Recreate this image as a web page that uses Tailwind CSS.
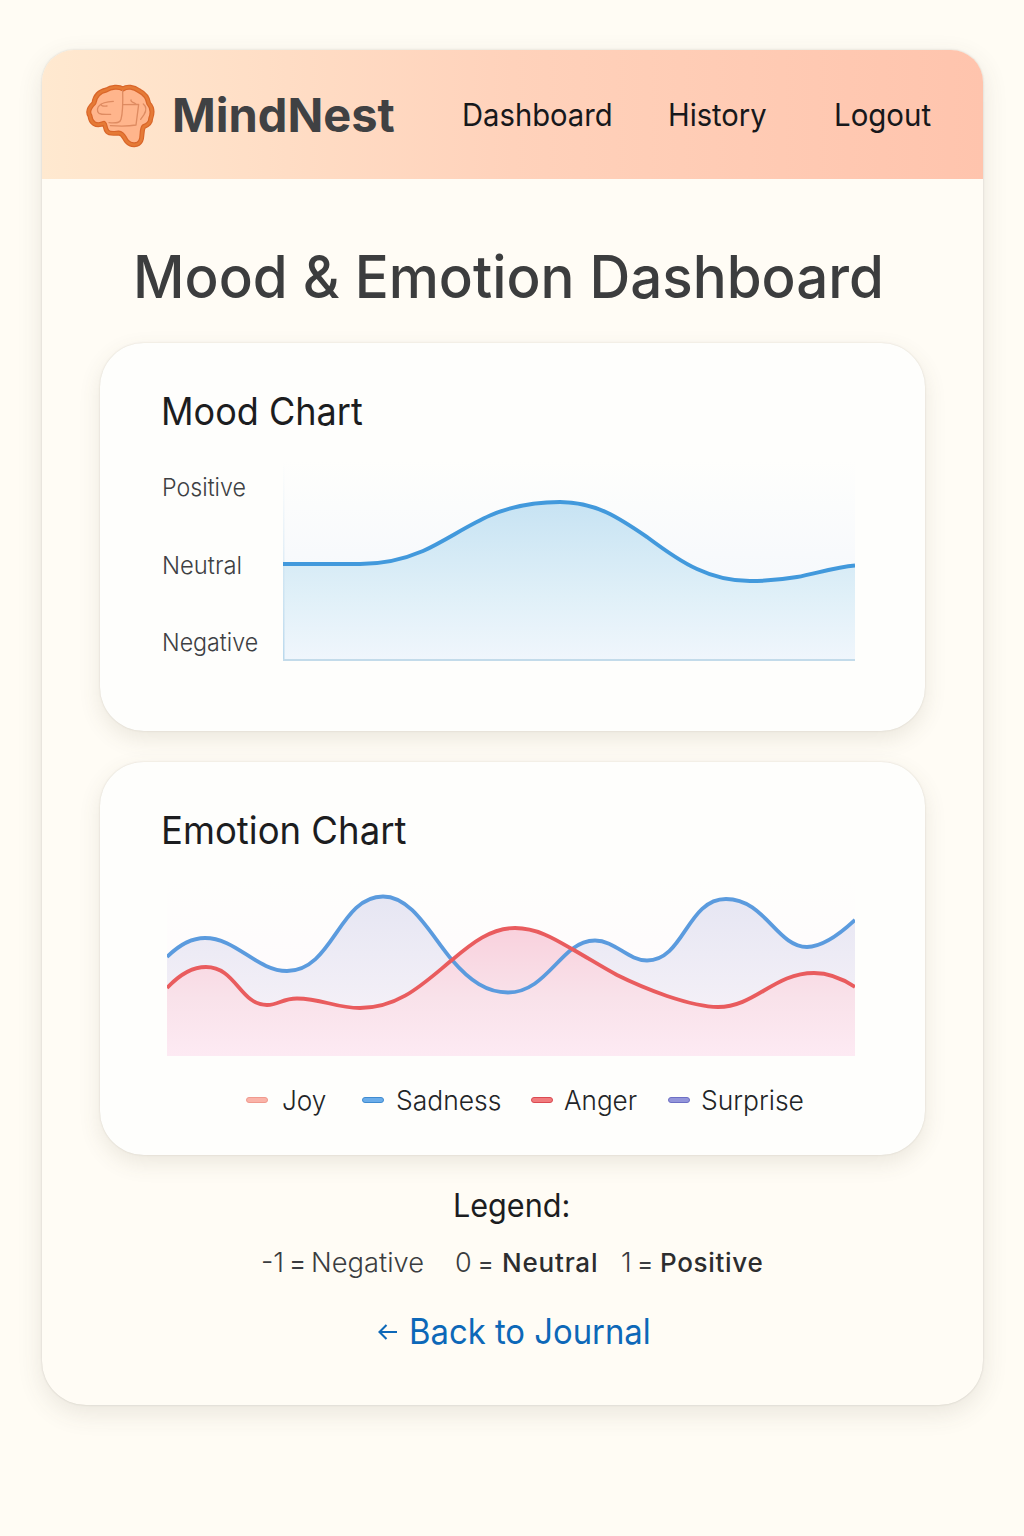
<!DOCTYPE html>
<html lang="en">
<head>
<meta charset="utf-8">
<title>MindNest – Mood &amp; Emotion Dashboard</title>
<script src="https://cdn.jsdelivr.net/npm/@tailwindcss/browser@4"></script>
</head>
<body class="min-h-screen bg-[#fffcf4] pt-[50px] pb-[131px] pl-[42px] font-['Inter',sans-serif] text-[#1c1d1f]">
<div class="h-[1355px] w-[941px] rounded-t-[32px] rounded-b-[44px] bg-[#fffcf5] shadow-[0_0_2px_0_rgba(70,65,55,0.22),0_8px_26px_rgba(70,65,55,0.12)]">

  <header class="flex h-[129px] items-center rounded-t-[32px] bg-linear-to-r from-[#ffe9d0] via-[#ffd2bb] to-[#ffc4ad] pt-[2px] pl-[44px] whitespace-nowrap">
    <svg class="mt-[2px] h-[66px] w-[70px] shrink-0" viewBox="49 42 210 198" fill="none" stroke-linecap="round" stroke-linejoin="round">
      <path d="M160 57C148 49 124 50 110 60C90 64 76 78 73 99C58 113 53 126 61 138C63 158 78 171 103 160C108 164 105 176 113 185C120 193 134 190 147 189C162 190 163 205 172 215C184 228 206 227 213 213C220 200 214 182 222 170C234 165 243 160 243 146C249 130 248 112 237 100C234 80 220 68 208 62C192 50 172 48 160 57Z" fill="#ffb58c" stroke="#d9662a" stroke-width="15"/>
      <path d="M160 57C148 49 124 50 110 60C90 64 76 78 73 99C58 113 53 126 61 138C63 158 78 171 103 160C108 164 105 176 113 185C120 193 134 190 147 189C162 190 163 205 172 215C184 228 206 227 213 213C220 200 214 182 222 170C234 165 243 160 243 146C249 130 248 112 237 100C234 80 220 68 208 62C192 50 172 48 160 57Z" stroke="#e57a36" stroke-width="8"/>
      <g stroke="#de8b61" stroke-width="4">
        <path d="M159 62C160 95 160 125 154 148C152 158 142 160 118 158"/>
        <path d="M161 104L207 103L199 165C178 169 150 169 122 167"/>
        <path d="M131 94C113 95 96 98 90 106C83 112 80 123 88 130C98 135 111 133 123 133"/>
        <path d="M94 103C96 111 106 108 112 108"/>
        <path d="M184 90C182 98 194 95 199 103M221 102C231 110 230 122 223 134L213 148"/>
      </g>
    </svg>
    <div class="ml-[16px] w-[290px] text-[47px] font-bold text-[#404143]">MindNest</div>
    <nav class="flex text-[31px] text-[#17181b]">
      <a class="block w-[206px] origin-left scale-x-[0.942]">Dashboard</a>
      <a class="block w-[166px] origin-left scale-x-[0.94]">History</a>
      <a class="block w-[104px] origin-left scale-x-[0.95]">Logout</a>
    </nav>
  </header>

  <h1 class="ml-[91px] flex h-[164px] origin-left scale-x-[0.957] items-center pt-[33px] text-[59px] font-[450] whitespace-nowrap text-[#3c3d3e]">Mood &amp; Emotion Dashboard</h1>

  <section class="ml-[58px] h-[388px] w-[825px] rounded-[44px] bg-[#fefefc] pt-[46px] pl-[61px] shadow-[0_0_2px_0_rgba(90,80,60,0.18),0_8px_22px_rgba(90,80,60,0.12)]">
    <h2 class="flex h-[45px] origin-left scale-x-[0.948] items-center text-[38px]">Mood Chart</h2>
    <div class="mt-[26px] flex">
      <div class="w-[122px] pl-px text-[24px] font-light text-[#3d4043]">
        <div class="flex h-[56px] origin-left scale-x-[0.968] items-center">Positive</div>
        <div class="flex h-[100px] origin-left scale-x-[0.99] items-center">Neutral</div>
        <div class="flex h-[53px] origin-left scale-x-[0.968] items-center">Negative</div>
      </div>
      <svg class="h-[202px] w-[572px]" viewBox="283 460 572 202" fill="none">
        <defs>
          <linearGradient id="sky" x1="0" y1="460" x2="0" y2="600" gradientUnits="userSpaceOnUse"><stop stop-color="#fefefc"/><stop offset="1" stop-color="#f5f8fc"/></linearGradient>
          <linearGradient id="mood" x1="0" y1="502" x2="0" y2="660" gradientUnits="userSpaceOnUse"><stop stop-color="#c7e3f3"/><stop offset=".6" stop-color="#e0f0f8"/><stop offset="1" stop-color="#f0f6fc"/></linearGradient>
          <linearGradient id="axis" x1="0" y1="460" x2="0" y2="661" gradientUnits="userSpaceOnUse"><stop stop-color="#d9e9f5" stop-opacity="0"/><stop offset="1" stop-color="#b9d8ec"/></linearGradient>
        </defs>
        <path d="M283 460H855V661H283Z" fill="url(#sky)"/>
        <path d="M283 564H360C381 564 402 560 423 551C445 541 468 525 490 515.500C512 506 536 502 560 502C596 502 620 518.500 647 537C663 549 680 561.500 697 569C714 577 732 581 750 581C766 581 781 579.700 797 577C816 573.500 836 567 855 565.500V660H283Z" fill="url(#mood)"/>
        <path d="M283 460H284.500V661H283Z" fill="url(#axis)"/>
        <path d="M283 660H855" stroke="#c3dbea" stroke-width="1.800"/>
        <path d="M283 564H360C381 564 402 560 423 551C445 541 468 525 490 515.500C512 506 536 502 560 502C596 502 620 518.500 647 537C663 549 680 561.500 697 569C714 577 732 581 750 581C766 581 781 579.700 797 577C816 573.500 836 567 855 565.500" stroke="#4299dc" stroke-width="4"/>
      </svg>
    </div>
  </section>

  <section class="mt-[31px] ml-[58px] h-[393px] w-[825px] rounded-[44px] bg-[#fefefc] pt-[46px] shadow-[0_0_2px_0_rgba(90,80,60,0.18),0_8px_22px_rgba(90,80,60,0.12)]">
    <h2 class="ml-[61px] flex h-[44px] origin-left scale-x-[0.961] items-center text-[38px]">Emotion Chart</h2>
    <svg class="mt-[28px] ml-[67px] h-[176px] w-[688px]" viewBox="167 880 688 176" fill="none">
      <defs>
        <linearGradient id="blush" x1="0" y1="880" x2="0" y2="1000" gradientUnits="userSpaceOnUse"><stop stop-color="#fefefc"/><stop offset="1" stop-color="#fefafc"/></linearGradient>
        <linearGradient id="sad" x1="0" y1="897" x2="0" y2="1010" gradientUnits="userSpaceOnUse"><stop stop-color="#e6e6f3"/><stop offset="1" stop-color="#f4f0f7"/></linearGradient>
        <linearGradient id="anger" x1="0" y1="928" x2="0" y2="1056" gradientUnits="userSpaceOnUse"><stop stop-color="#f9d1dd"/><stop offset=".55" stop-color="#f9e2ea"/><stop offset="1" stop-color="#fdeaf3"/></linearGradient>
      </defs>
      <path d="M167 880H855V1056H167Z" fill="url(#blush)"/>
      <path d="M167 957C180 944 192 938 205 938C236 938 257 971 287 971C333 971 339 896.500 383 896.500C412 896.500 430 934 452 960C470 981 487 992.500 508 992.500C537 992.500 552 965 572 949C580 943 587 940.500 595 940.500C615 940.500 628 960.500 647 960.500C684 960.500 687 899 726 899C765 899 777 947 807 947C823 947 840 934 855 920V1056H167Z" fill="url(#sad)"/>
      <path d="M167 988C180 974 192 967 206 967C236 967 240 1005 267 1005C279 1005 282 998.500 297 998.500C322 998.500 335 1008 360 1008C400 1008 425 982 452 960C472 943 491 928 515 928C537 928 555 939 572 949C588 958 602 967 617 975C633 983 650 990 667 996C685 1002 702 1007 718 1007C755 1007 774 973 814 973C829 973 843 979 855 987V1056H167Z" fill="url(#anger)"/>
      <path d="M167 957C180 944 192 938 205 938C236 938 257 971 287 971C333 971 339 896.500 383 896.500C412 896.500 430 934 452 960C470 981 487 992.500 508 992.500C537 992.500 552 965 572 949C580 943 587 940.500 595 940.500C615 940.500 628 960.500 647 960.500C684 960.500 687 899 726 899C765 899 777 947 807 947C823 947 840 934 855 920" stroke="#5b9bde" stroke-width="3.800"/>
      <path d="M167 988C180 974 192 967 206 967C236 967 240 1005 267 1005C279 1005 282 998.500 297 998.500C322 998.500 335 1008 360 1008C400 1008 425 982 452 960C472 943 491 928 515 928C537 928 555 939 572 949C588 958 602 967 617 975C633 983 650 990 667 996C685 1002 702 1007 718 1007C755 1007 774 973 814 973C829 973 843 979 855 987" stroke="#e95c5e" stroke-width="3.800"/>
    </svg>
    <div class="mt-[22px] flex h-[45px] items-center pl-[146px] text-[27.5px] font-light text-[#222427]">
      <div class="flex w-[116px] items-center"><i class="mr-[14px] mb-[2px] h-[6px] w-[22px] rounded-[3px] border border-[#f09a8e] bg-[#fab3a8]"></i><span class="origin-left scale-x-[0.95]">Joy</span></div>
      <div class="flex w-[169px] items-center"><i class="mr-[12px] mb-[2px] h-[6px] w-[22px] rounded-[3px] border border-[#3f8bd0] bg-[#6badea]"></i><span class="origin-left scale-x-[0.962]">Sadness</span></div>
      <div class="flex w-[137px] items-center"><i class="mr-[11px] mb-[2px] h-[6px] w-[22px] rounded-[3px] border border-[#db4a52] bg-[#f17b7d]"></i><span class="origin-left scale-x-[0.948]">Anger</span></div>
      <div class="flex items-center"><i class="mr-[11px] mb-[2px] h-[6px] w-[22px] rounded-[3px] border border-[#6d6fc4] bg-[#9395da]"></i><span class="origin-left scale-x-[0.962]">Surprise</span></div>
    </div>
  </section>

  <h3 class="mt-[30px] ml-[411px] flex h-[41px] origin-left scale-x-[0.955] items-center text-[32px]">Legend:</h3>
  <div class="mt-[16px] flex h-[40px] items-center pl-[219px] text-[27px] font-light whitespace-nowrap text-[#3a3c3f]">
    <span class="mt-[2px] w-[194px] origin-left scale-x-[1.01] [word-spacing:-2.5px]">-1 <span class="text-[25px] font-normal">=</span> Negative</span>
    <span class="mt-[2px] w-[47px] [word-spacing:-1.5px]">0 <span class="text-[24px] font-normal">=</span></span>
    <span class="w-[119px] text-[26px] font-medium tracking-[0.8px] text-[#2c2d2f]">Neutral</span>
    <span class="mt-[2px] w-[39px] [word-spacing:-2px]">1 <span class="text-[24px] font-normal">=</span></span>
    <span class="text-[26px] font-medium tracking-[0.7px] text-[#2c2d2f]">Positive</span>
  </div>
  <a class="mt-[29px] ml-[336px] flex h-[40px] items-center whitespace-nowrap text-[#0d68b8]">
    <svg class="mt-[2px] mr-[11px] h-[16px] w-[20px] shrink-0" viewBox="0 0 20 16" fill="none" stroke="currentColor" stroke-width="2.100"><path d="M19 8H1.500M8.500 1L1.500 8L8.500 15"/></svg>
    <span class="origin-left scale-x-[0.938] text-[35px]">Back to Journal</span>
  </a>
</div>
</body>
</html>
